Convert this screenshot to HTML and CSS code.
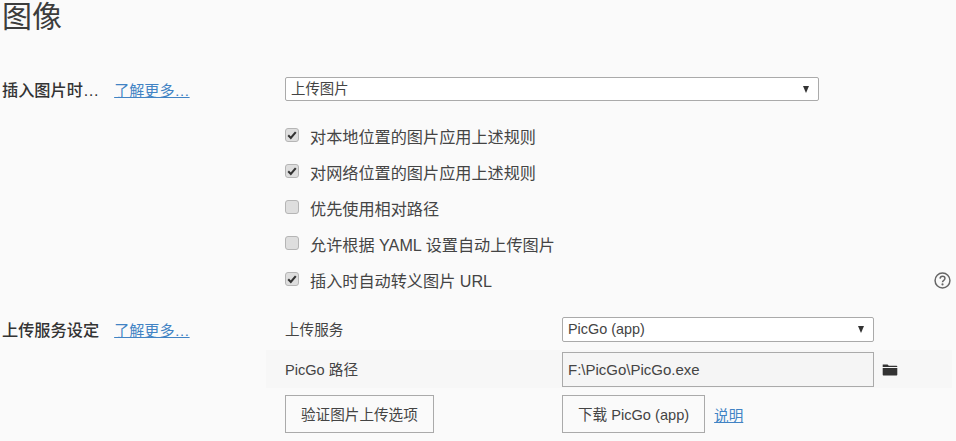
FILE: index.html
```html
<!DOCTYPE html>
<html lang="zh-CN">
<head>
    <meta charset="UTF-8">
    <meta name="viewport" content="width=device-width, initial-scale=1.0">
    <title>图像</title>
    <link rel="stylesheet" href="styles.css">
</head>
<body>
    <h1>图像</h1>

    <section class="group group-insert">
        <div class="group-title">
            <strong>插入图片时…</strong>
            <a href="#more">了解更多…</a>
        </div>
        <div class="group-body">
            <div class="select select-wide"><span>上传图片</span></div>
            <ul class="checks">
                <li>
                    <span class="check on"><svg viewBox="0 0 14 14"><path d="M2.6 7.4 5.6 10.4 11.4 3.6" /></svg></span>
                    对本地位置的图片应用上述规则
                </li>
                <li>
                    <span class="check on"><svg viewBox="0 0 14 14"><path d="M2.6 7.4 5.6 10.4 11.4 3.6" /></svg></span>
                    对网络位置的图片应用上述规则
                </li>
                <li>
                    <span class="check"></span>
                    优先使用相对路径
                </li>
                <li>
                    <span class="check"></span>
                    允许根据 YAML 设置自动上传图片
                </li>
                <li>
                    <span class="check on"><svg viewBox="0 0 14 14"><path d="M2.6 7.4 5.6 10.4 11.4 3.6" /></svg></span>
                    插入时自动转义图片 URL
                    <svg class="help" viewBox="0 0 16 16">
                        <circle cx="8" cy="8" r="7" />
                        <path d="M5.7 6.2C5.8 4.8 6.8 4 8 4c1.3 0 2.3.9 2.3 2 0 1.9-2.3 1.8-2.3 3.6" />
                        <circle class="dot" cx="8" cy="11.7" r="1" />
                    </svg>
                </li>
            </ul>
        </div>
    </section>

    <section class="group group-upload">
        <div class="group-title">
            <strong>上传服务设定</strong>
            <a href="#more">了解更多…</a>
        </div>
        <div class="form-rows">
            <div class="form-row">
                <span class="row-label row-text">上传服务</span>
                <div class="select select-short"><span>PicGo (app)</span></div>
            </div>
            <div class="form-row row-shaded">
                <span class="row-label row-text">PicGo 路径</span>
                <div class="path-input">F:\PicGo\PicGo.exe</div>
                <svg class="folder" viewBox="0 0 16 13">
                    <path d="M1 1.5h4.6l1.2 1.2H14.400c.5 0 .9.4.9.9v.4H.7V1.800c0-.2.1-.3.3-.3z" />
                    <path d="M.7 5h14.600v6.500c0 .6-.4 1-1 1H1.700c-.6 0-1-.4-1-1z" />
                </svg>
            </div>
            <div class="form-row row-buttons">
                <span class="row-label"><button type="button" class="btn btn-wide">验证图片上传选项</button></span>
                <button type="button" class="btn">下载 PicGo (app)</button>
                <a href="#help" class="help-link">说明</a>
            </div>
        </div>
    </section>
</body>
</html>
```

FILE: styles.css
```css
body {
    margin: 0;
    background-color: #fafafa;
    color: #444;
    font-family: "Liberation Sans", "Noto Sans CJK SC", sans-serif;
    font-size: 16px;
    overflow: hidden;
}

h1 {
    margin: 0 0 0 2px;
    height: 36px;
    font-size: 30px;
    font-weight: normal;
    line-height: 34px;
    color: #3c3c3c;
}

a {
    color: #4183c4;
}

.group {
    display: flex;
}

.group-title {
    flex: none;
    display: flex;
    align-items: baseline;
    gap: 15px;
    width: 283px;
    margin-left: 2px;
}

.group-title strong {
    font-size: 16.200px;
    font-weight: 500;
    color: #333;
}

.group-title a {
    font-size: 15.100px;
}

.group-insert {
    margin-top: 41px;
}

.group-insert .group-title {
    height: 24px;
    align-items: center;
}

.group-body {
    flex: none;
    width: 671px;
}

.select {
    position: relative;
    box-sizing: border-box;
    height: 24px;
    padding-left: 5px;
    background: white;
    border: 1px solid #aaa;
    border-radius: 2px;
    font-size: 14.4px;
    line-height: 22px;
}

.select::after {
    content: "";
    position: absolute;
    right: 9px;
    top: 8px;
    border-left: 3.500px solid transparent;
    border-right: 3.500px solid transparent;
    border-top: 7px solid #333;
}

.select-wide {
    width: 534px;
}

.select-short {
    width: 312px;
    height: 25px;
    line-height: 23px;
}

.checks {
    list-style: none;
    margin: 17px 0 0;
    padding: 0;
}

.checks li {
    display: flex;
    align-items: center;
    gap: 11px;
    height: 36px;
    font-size: 16.150px;
}

.check {
    flex: none;
    box-sizing: border-box;
    width: 14px;
    height: 14px;
    margin-top: -2px;
    background: #dedede;
    border: 1px solid #b5b5b5;
    border-radius: 3px;
}

.check svg {
    display: block;
    width: 12px;
    height: 12px;
    fill: none;
    stroke: #333;
    stroke-width: 2.400;
}

.help {
    width: 17px;
    height: 17px;
    margin-left: auto;
    margin-right: 5px;
    fill: none;
    stroke: #666;
    stroke-width: 1.400;
}

.help .dot {
    fill: #666;
    stroke: none;
}

.group-upload {
    margin-top: 19px;
}

.group-upload .group-title {
    width: 264px;
    height: 23px;
    align-items: center;
}

.form-rows {
    flex: none;
    width: 686px;
}

.form-row {
    display: flex;
    align-items: center;
    padding-left: 19px;
    font-size: 14.600px;
}

.row-label {
    flex: none;
    width: 277px;
}

.row-text {
    margin-top: -2px;
}

.row-shaded {
    height: 38px;
    margin-top: 8px;
    background-color: #f7f7f7;
}

.path-input {
    box-sizing: border-box;
    width: 312px;
    height: 35px;
    padding-left: 5px;
    background-color: #f5f5f5;
    border: 1px solid #aaa;
    font-size: 15px;
    line-height: 33px;
}

.folder {
    width: 16px;
    height: 13px;
    margin-left: 8px;
    fill: #333;
}

.row-buttons {
    margin-top: 7px;
}

.btn {
    box-sizing: border-box;
    height: 38px;
    padding: 0 15px 2px;
    background: transparent;
    border: 1px solid #aaa;
    color: #444;
    font: inherit;
}

.help-link {
    margin-left: 9px;
}
```
